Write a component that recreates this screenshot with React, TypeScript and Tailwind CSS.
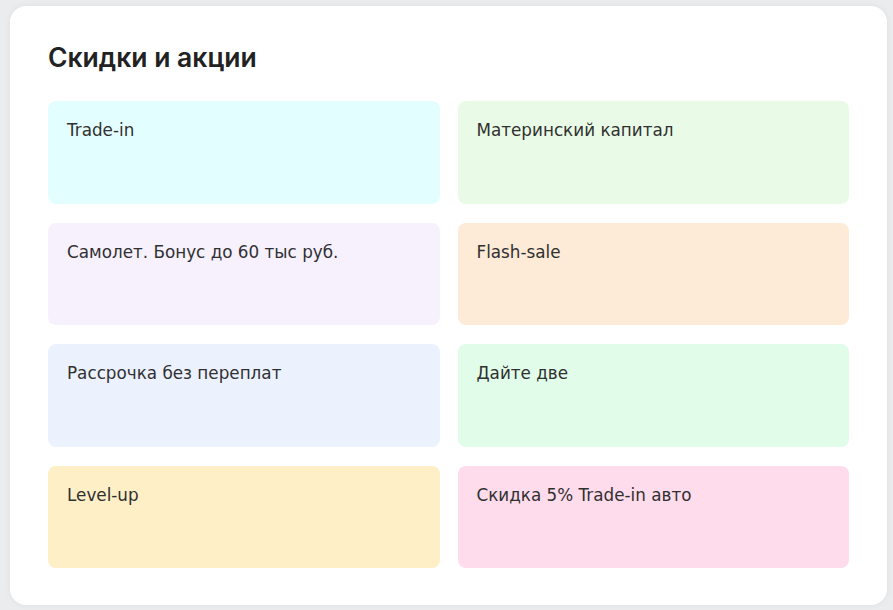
import React from 'react';

type Promo = {
  title: string;
  bg: string;
};

const promos: Promo[] = [
  { title: 'Trade-in', bg: 'bg-[#e3fefe]' },
  { title: 'Материнский капитал', bg: 'bg-[#e9fbe6]' },
  { title: 'Самолет. Бонус до 60 тыс руб.', bg: 'bg-[#f7f1fe]' },
  { title: 'Flash-sale', bg: 'bg-[#fdebd7]' },
  { title: 'Рассрочка без переплат', bg: 'bg-[#ecf1fe]' },
  { title: 'Дайте две', bg: 'bg-[#e1fce9]' },
  { title: 'Level-up', bg: 'bg-[#feefc6]' },
  { title: 'Скидка 5% Trade-in авто', bg: 'bg-[#fedcec]' },
];

function PromoCard({ promo }: { promo: Promo }) {
  return (
    <div className={`h-[102.5px] rounded-lg px-[19px] pt-[16px] ${promo.bg}`}>
      <span className="text-[16.8px] leading-[26px] text-[#303030]">{promo.title}</span>
    </div>
  );
}

export default function App() {
  return (
    <div className="min-h-[610px] bg-[#ebecee] pl-[10px] pr-[6px] pt-[6px] pb-[5px]">
      <div className="rounded-2xl bg-white px-[38px] pt-[34px] pb-[37px] shadow-[0_0_6px_rgba(0,0,0,0.06)] font-['DejaVu_Sans',sans-serif]">
        <h2 className="mb-[27px] font-['Inter',sans-serif] text-[26.5px] font-semibold leading-[34px] text-[#222]">
          Скидки и акции
        </h2>
        <div className="grid grid-cols-2 gap-x-[18px] gap-y-[19px]">
          {promos.map((p) => (
            <PromoCard key={p.title} promo={p} />
          ))}
        </div>
      </div>
    </div>
  );
}
